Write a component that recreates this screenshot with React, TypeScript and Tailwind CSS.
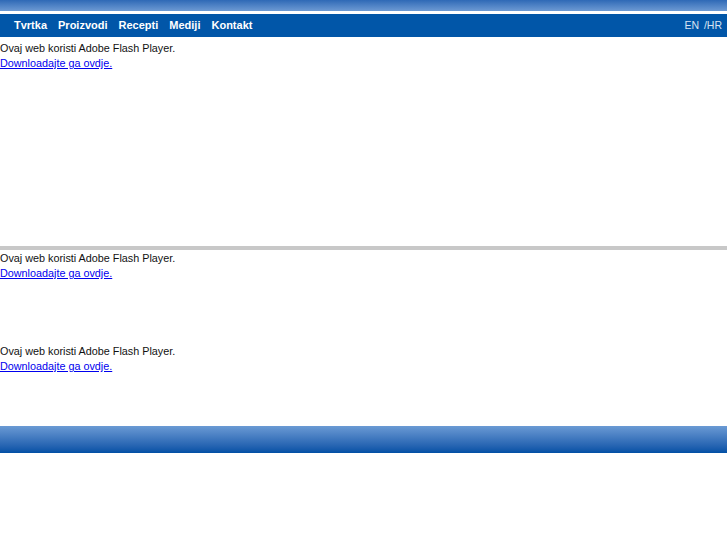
import React from "react";

const FlashNotice: React.FC = () => (
  <div className="text-[10.8px] leading-[15px] text-[#111]">
    <p>Ovaj web koristi Adobe Flash Player.</p>
    <a href="#" className="text-[#0000ee] underline">
      Downloadajte ga ovdje.
    </a>
  </div>
);

const App: React.FC = () => {
  const nav = ["Tvrtka", "Proizvodi", "Recepti", "Mediji", "Kontakt"];

  return (
    <div className="w-[727px] bg-white font-['Liberation_Sans',Arial,sans-serif]">
      {/* top strip */}
      <div className="h-[11px] bg-gradient-to-b from-[#2e69b6] to-[#6d9ad3]" />
      <div className="h-[3px] bg-white" />

      {/* nav bar */}
      <div className="flex h-[23px] items-center justify-between bg-[#0156a8] pl-[14px] pr-[5px]">
        <div className="flex gap-[11px] text-[11px] font-bold text-white">
          {nav.map((item) => (
            <span key={item}>{item}</span>
          ))}
        </div>
        <div className="text-[10.5px] text-[#d8e4f3]">
          EN <span className="ml-[2px]">/HR</span>
        </div>
      </div>

      {/* flash areas */}
      <div className="h-[209px] pt-[4px]">
        <FlashNotice />
      </div>
      <div className="h-[4px] bg-[#c8c8c8]" />
      <div className="h-[93px] pt-[1px]">
        <FlashNotice />
      </div>
      <div className="h-[83px] pt-[1px]">
        <FlashNotice />
      </div>

      {/* bottom bar */}
      <div className="h-[27px] bg-gradient-to-b from-[#6a9ad4] to-[#0050a5]" />
    </div>
  );
};

export default App;
